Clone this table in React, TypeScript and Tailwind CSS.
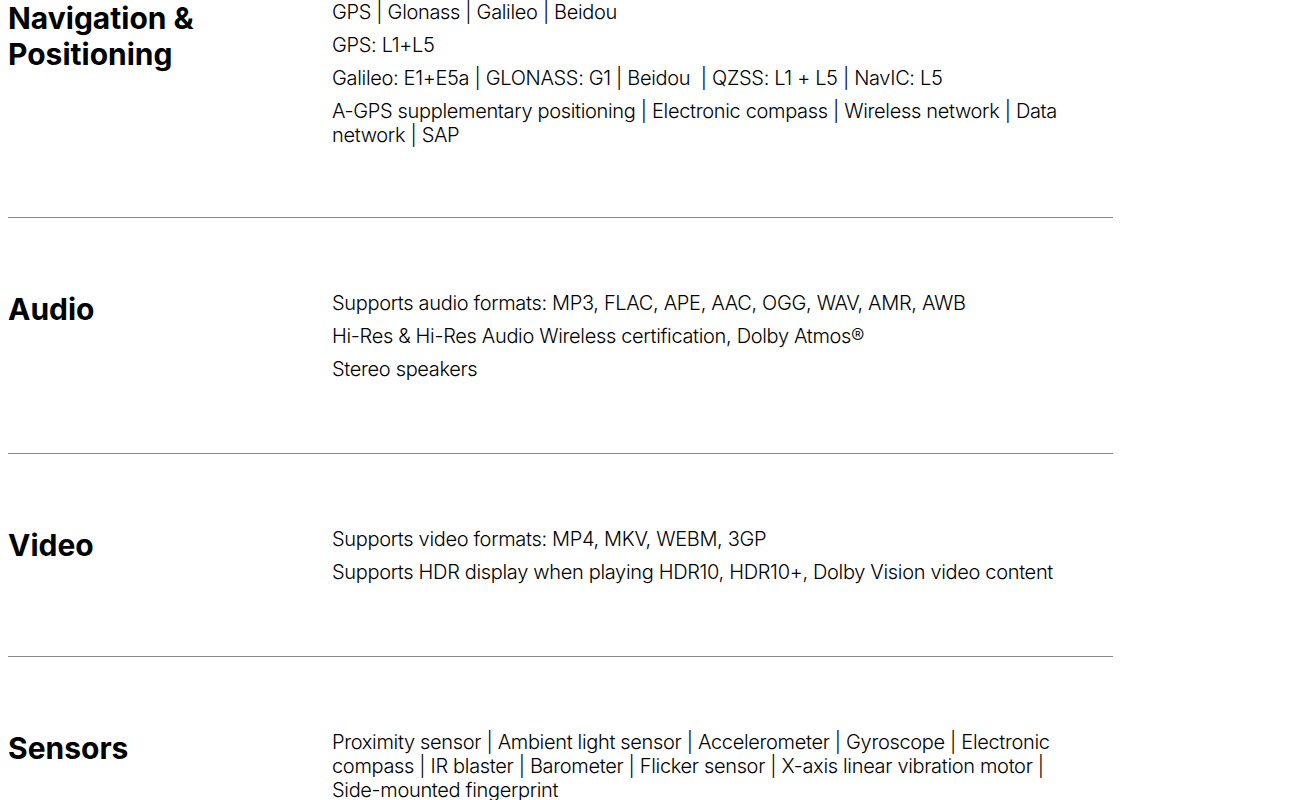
const sections = [
  {
    title: ["Navigation &", "Positioning"],
    lines: [
      "GPS | Glonass | Galileo | Beidou",
      "GPS: L1+L5",
      "Galileo: E1+E5a | GLONASS: G1 | Beidou \u00a0| QZSS: L1 + L5 | NavIC: L5",
      "A-GPS supplementary positioning | Electronic compass | Wireless network | Data network | SAP",
    ],
    first: true,
  },
  {
    title: ["Audio"],
    lines: [
      "Supports audio formats: MP3, FLAC, APE, AAC, OGG, WAV, AMR, AWB",
      "Hi-Res & Hi-Res Audio Wireless certification, Dolby Atmos\u00ae",
      "Stereo speakers",
    ],
  },
  {
    title: ["Video"],
    lines: [
      "Supports video formats: MP4, MKV, WEBM, 3GP",
      "Supports HDR display when playing HDR10, HDR10+, Dolby Vision video content",
    ],
  },
  {
    title: ["Sensors"],
    lines: [
      "Proximity sensor | Ambient light sensor | Accelerometer | Gyroscope | Electronic compass | IR blaster | Barometer | Flicker sensor | X-axis linear vibration motor | Side-mounted fingerprint",
    ],
  },
];

export default function App() {
  return (
    <div className="min-h-[800px] bg-white text-black font-['Inter',sans-serif]">
      <div className="ml-2 w-[1105px]">
        {sections.map((s, i) => (
          <div key={i}>
            {i > 0 && <div className="h-px bg-[#8a8a8a]" />}
            <div className={`flex items-start ${s.first ? "pb-[70px]" : "pt-[73px] pb-[72px]"}`}>
              <h2 className="w-[324px] shrink-0 text-[30px] font-bold leading-[36px] mt-0">
                {s.title.map((t) => (
                  <div key={t}>{t}</div>
                ))}
              </h2>
              <div className="w-[740px] text-[20px] font-light leading-[24px] tracking-[-0.33px]">
                {s.lines.map((l, j) => (
                  <p key={j} className={j > 0 ? "mt-[9px]" : ""}>
                    {l}
                  </p>
                ))}
              </div>
            </div>
          </div>
        ))}
      </div>
    </div>
  );
}
